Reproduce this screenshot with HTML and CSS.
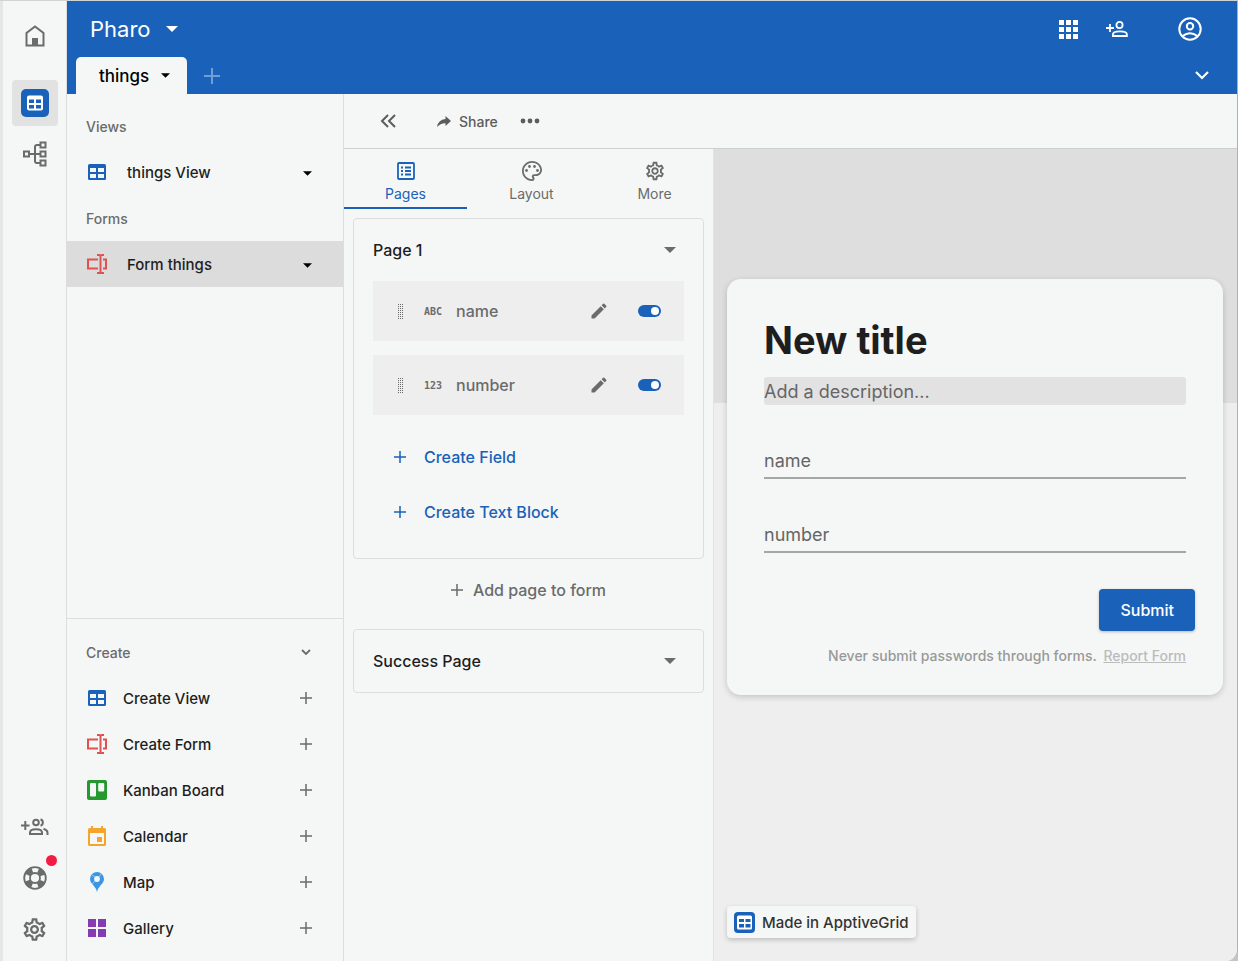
FILE: index.html
```html
<!DOCTYPE html>
<html lang="en">
<head>
    <meta charset="utf-8">
    <meta name="viewport" content="width=device-width, initial-scale=1">
    <title>Pharo - Form things</title>
    <link rel="stylesheet" href="styles.css">
</head>
<body>
    <!-- shared icons -->
    <svg class="icon-defs" aria-hidden="true">
        <symbol id="icon-caret" viewBox="0 0 12 6"><path d="M0 0h12L6 6z" fill="currentColor"/></symbol>
        <symbol id="icon-plus" viewBox="0 0 12 12"><path d="M6 0v12M0 6h12" stroke="currentColor" stroke-width="1.5" fill="none"/></symbol>
        <symbol id="icon-table" viewBox="0 0 18 16">
            <rect width="18" height="16" rx="1.5" fill="#1a62b9"/>
            <path d="M2 4h6v4H2zM10 4h6v4h-6zM2 10h6v4H2zM10 10h6v4h-6z" fill="#f5f7f6"/>
        </symbol>
        <symbol id="icon-form" viewBox="0 0 20 20">
            <path d="M11 5.5H1v9h10M16 5.500h3v9h-3M10 1h2.200q1.300 0 1.300 1.300v15.400q0 1.300-1.300 1.300H10M17 1h-2.200q-1.300 0-1.300 1.300M17 19h-2.200q-1.300 0-1.300-1.300" fill="none" stroke="#e05252" stroke-width="2"/>
        </symbol>
        <symbol id="icon-gear" viewBox="0 0 24 24">
            <path fill="currentColor" d="M19.430 12.980c.04-.32.07-.64.07-.98 0-.34-.03-.66-.07-.98l2.110-1.650c.19-.15.24-.42.12-.64l-2-3.460c-.09-.16-.26-.25-.44-.25-.06 0-.12.01-.17.03l-2.490 1c-.52-.4-1.080-.73-1.690-.98l-.38-2.650C14.460 2.180 14.250 2 14 2h-4c-.25 0-.46.18-.49.42l-.38 2.650c-.61.25-1.170.59-1.690.98l-2.490-1c-.06-.02-.12-.03-.18-.03-.17 0-.34.09-.43.25l-2 3.460c-.13.22-.07.49.12.64l2.110 1.650c-.04.32-.07.65-.07.98 0 .33.03.66.07.98l-2.110 1.650c-.19.15-.24.42-.12.64l2 3.460c.09.16.26.25.44.25.06 0 .12-.01.17-.03l2.490-1c.52.4 1.080.73 1.690.98l.38 2.650c.03.24.24.42.49.42h4c.25 0 .46-.18.49-.42l.38-2.650c.61-.25 1.170-.59 1.690-.98l2.490 1c.06.02.12.03.18.03.17 0 .34-.09.43-.25l2-3.460c.12-.22.07-.49-.12-.64l-2.110-1.650zm-1.980-1.710c.04.31.05.52.05.73 0 .21-.02.43-.05.73l-.14 1.130.89.7 1.080.84-.7 1.210-1.270-.51-1.040-.42-.9.68c-.43.32-.84.56-1.250.73l-1.060.43-.16 1.130-.2 1.350h-1.400l-.19-1.350-.16-1.130-1.060-.43c-.43-.18-.83-.41-1.230-.71l-.91-.7-1.060.43-1.270.51-.7-1.210 1.080-.84.89-.7-.14-1.130c-.03-.31-.05-.54-.05-.74s.02-.43.05-.73l.14-1.130-.89-.7-1.080-.84.7-1.210 1.270.51 1.040.42.9-.68c.43-.32.84-.56 1.250-.73l1.060-.43.16-1.130.2-1.350h1.390l.19 1.350.16 1.130 1.060.43c.43.18.83.41 1.230.71l.91.7 1.060-.43 1.270-.51.7 1.210-1.070.85-.89.7.14 1.130zM12 8c-2.210 0-4 1.790-4 4s1.790 4 4 4 4-1.790 4-4-1.790-4-4-4zm0 6c-1.100 0-2-.9-2-2s.9-2 2-2 2 .9 2 2-.9 2-2 2z"/>
        </symbol>
        <symbol id="icon-edit" viewBox="0 0 24 24">
            <path fill="currentColor" d="M3 17.250V21h3.750L17.810 9.940l-3.750-3.750L3 17.250zM20.710 7.040c.39-.39.39-1.020 0-1.410l-2.340-2.340a1 1 0 0 0-1.410 0l-1.830 1.830 3.750 3.750 1.830-1.830z"/>
        </symbol>
        <symbol id="icon-drag" viewBox="0 0 5 15">
            <path d="M.5 0v15M2.500 0v15M4.500 0v15" stroke="currentColor" stroke-width="1" stroke-dasharray="1 1" fill="none"/>
        </symbol>
    </svg>

    <div class="app">
        <nav class="rail" aria-label="Main">
            <button class="rail-btn rail-home" aria-label="Home">
                <svg width="20" height="22" viewBox="0 0 20 22"><path d="M1.500 20.500V8L10 1.500 18.500 8v12.500z" fill="none" stroke="currentColor" stroke-width="2"/><path d="M7 13h6v8H7z" fill="currentColor"/></svg>
            </button>
            <button class="rail-btn active" aria-label="Grids">
                <svg width="28" height="28" viewBox="0 0 28 28"><rect width="28" height="28" rx="5" fill="#1a62b9"/><rect x="6" y="6.500" width="16" height="15" rx="2" fill="#fff"/><path d="M8 10.500h5v3.500H8zM15 10.500h5v3.500h-5zM8 16h5v3.500H8zM15 16h5v3.500h-5z" fill="#1a62b9"/></svg>
            </button>
            <button class="rail-btn" aria-label="Flows">
                <svg width="24" height="26" viewBox="0 0 24 26" fill="none" stroke="currentColor" stroke-width="2"><path d="M1 10.500h5v5H1zM17.500 1.500h5v5h-5zM17.500 10.500h5v5h-5zM17.500 19.500h5v5h-5zM6 13h11.500M17.500 4H14q-2 0-2 2v14q0 2 2 2h3.500"/></svg>
            </button>
            <div class="rail-space"></div>
            <button class="rail-btn" aria-label="Invite to team">
                <svg width="28" height="18" viewBox="0 0 28 18" fill="none" stroke="currentColor" stroke-width="2"><path d="M0 7.500h8.500M4.300 3v9"/><circle cx="15" cy="4.500" r="2.800"/><path d="M9 16v-1.500c0-4.500 12-4.500 12 0V16z"/><path d="M19.500 1.200a3.500 3.500 0 0 1 0 6.600M22.500 10.800q4 1.400 4 3.700V17"/></svg>
            </button>
            <button class="rail-btn" aria-label="Help">
                <svg width="24" height="24" viewBox="0 0 24 24" fill="none" stroke="currentColor"><circle cx="12" cy="12" r="10.800" stroke-width="1.800"/><circle cx="12" cy="12" r="5" stroke-width="1.800"/><circle cx="12" cy="12" r="8.200" stroke-width="5.500" stroke-dasharray="6.880 6" stroke-dashoffset="-3"/></svg>
                <span class="rail-dot"></span>
            </button>
            <button class="rail-btn" aria-label="Settings">
                <svg width="27" height="27"><use href="#icon-gear"/></svg>
            </button>
        </nav>

        <div class="workspace">
            <header class="topbar">
                <div class="topbar-row">
                    <button class="space-name">Pharo <svg width="12" height="6"><use href="#icon-caret"/></svg></button>
                    <div class="topbar-actions">
                        <button aria-label="Apps"><svg width="19" height="19" viewBox="0 0 19 19" fill="#fff"><path d="M0 0h5v5H0zM7 0h5v5H7zM14 0h5v5h-5zM0 7h5v5H0zM7 7h5v5H7zM14 7h5v5h-5zM0 14h5v5H0zM7 14h5v5H7zM14 14h5v5h-5z"/></svg></button>
                        <button aria-label="Add person"><svg width="22" height="16" viewBox="0 0 22 16" fill="none" stroke="#fff" stroke-width="1.800"><path d="M0 7h8M4 3v8"/><circle cx="13.500" cy="4" r="3.100"/><path d="M6.900 15v-1.600c0-4 14-4 14 0V15z"/></svg></button>
                        <button class="account" aria-label="Account"><svg width="24" height="24" viewBox="0 0 24 24" fill="none" stroke="#fff" stroke-width="2"><circle cx="12" cy="12" r="10.700"/><circle cx="12" cy="9.200" r="3.200"/><path d="M4.600 19q7.400-5.500 14.800 0"/></svg></button>
                    </div>
                </div>
                <div class="tab-row">
                    <button class="grid-tab">things <svg width="9" height="5"><use href="#icon-caret"/></svg></button>
                    <button class="tab-add" aria-label="Add grid"><svg width="16" height="16"><use href="#icon-plus"/></svg></button>
                    <button class="tab-more" aria-label="Show all grids"><svg width="14" height="9" viewBox="0 0 14 9"><path d="M1 1l6 6 6-6" fill="none" stroke="#fff" stroke-width="2.200"/></svg></button>
                </div>
            </header>

            <div class="body">
                <aside class="sidebar">
                    <section class="views">
                        <h2 class="side-title">Views</h2>
                        <button class="side-item">
                            <svg class="side-icon" width="18" height="16"><use href="#icon-table"/></svg>
                            <span>things View</span>
                            <svg class="side-end" width="9" height="5"><use href="#icon-caret"/></svg>
                        </button>
                        <h2 class="side-title">Forms</h2>
                        <button class="side-item selected">
                            <svg class="side-icon" width="20" height="20"><use href="#icon-form"/></svg>
                            <span>Form things</span>
                            <svg class="side-end" width="9" height="5"><use href="#icon-caret"/></svg>
                        </button>
                    </section>
                    <section class="create">
                        <button class="side-title create-toggle">Create <svg width="10" height="6" viewBox="0 0 10 6"><path d="M1 1l4 4 4-4" fill="none" stroke="currentColor" stroke-width="1.800"/></svg></button>
                        <button class="side-item">
                            <svg class="side-icon" width="18" height="16"><use href="#icon-table"/></svg>
                            <span>Create View</span>
                            <svg class="side-end" width="12" height="12"><use href="#icon-plus"/></svg>
                        </button>
                        <button class="side-item">
                            <svg class="side-icon" width="20" height="20"><use href="#icon-form"/></svg>
                            <span>Create Form</span>
                            <svg class="side-end" width="12" height="12"><use href="#icon-plus"/></svg>
                        </button>
                        <button class="side-item">
                            <svg class="side-icon" width="20" height="20" viewBox="0 0 20 20"><rect width="20" height="20" rx="2" fill="#23992e"/><rect x="3" y="3" width="6" height="13.500" rx="1" fill="#f5f7f6"/><rect x="11.200" y="3" width="6" height="8.500" rx="1" fill="#f5f7f6"/></svg>
                            <span>Kanban Board</span>
                            <svg class="side-end" width="12" height="12"><use href="#icon-plus"/></svg>
                        </button>
                        <button class="side-item">
                            <svg class="side-icon" width="18" height="20" viewBox="0 0 18 20"><path d="M3 0h2v2h8V0h2v2h1.500Q18 2 18 3.500v15q0 1.500-1.500 1.500h-15Q0 20 0 18.500v-15Q0 2 1.500 2H3zM2 7v11h14V7z" fill="#f5a62a" fill-rule="evenodd"/><path d="M9 11h5v5H9z" fill="#f5a62a"/></svg>
                            <span>Calendar</span>
                            <svg class="side-end" width="12" height="12"><use href="#icon-plus"/></svg>
                        </button>
                        <button class="side-item">
                            <svg class="side-icon" width="14" height="20" viewBox="0 0 14 20"><path d="M7 20Q6.300 16.500 3.500 13.500 0 10 0 7a7 7 0 0 1 14 0q0 3-3.500 6.500Q7.700 16.500 7 20z" fill="#3b97e3"/><circle cx="7" cy="7" r="2.900" fill="#f5f7f6"/><path d="M2 3l3 2M11.500 1.500L9 5M5 9l-3 3" stroke="#b5d7f3" stroke-width=".8"/></svg>
                            <span>Map</span>
                            <svg class="side-end" width="12" height="12"><use href="#icon-plus"/></svg>
                        </button>
                        <button class="side-item">
                            <svg class="side-icon" width="18" height="18" viewBox="0 0 18 18"><path d="M0 0h8v8H0zM10 0h8v8h-8zM0 10h8v8H0zM10 10h8v8h-8z" fill="#873bb3"/></svg>
                            <span>Gallery</span>
                            <svg class="side-end" width="12" height="12"><use href="#icon-plus"/></svg>
                        </button>
                    </section>
                </aside>

                <main class="content">
                    <div class="toolbar">
                        <button aria-label="Collapse sidebar"><svg width="16" height="14" viewBox="0 0 16 14"><path d="M8 1L2 7l6 6M15 1L9 7l6 6" fill="none" stroke="currentColor" stroke-width="2"/></svg></button>
                        <button class="share"><svg width="14" height="11" viewBox="0 0 14 11"><path d="M8.500 0L14 5l-5.500 5V7.200Q3.500 7 0 11 1 3.800 8.500 3z" fill="currentColor"/></svg> Share</button>
                        <button aria-label="More actions"><svg width="20" height="6" viewBox="0 0 20 6" fill="currentColor"><circle cx="3" cy="3" r="2.400"/><circle cx="10" cy="3" r="2.400"/><circle cx="17" cy="3" r="2.400"/></svg></button>
                    </div>

                    <div class="editor">
                        <div class="panel">
                            <div class="panel-tabs" role="tablist">
                                <button class="panel-tab current" role="tab" aria-selected="true">
                                    <svg width="18" height="18" viewBox="0 0 18 18" fill="none" stroke="currentColor" stroke-width="1.800"><rect x="1" y="1" width="16" height="16" rx="1"/><path d="M4 5.500h2M8 5.500h6M4 9h2M8 9h6M4 12.500h2M8 12.500h6"/></svg>
                                    Pages
                                </button>
                                <button class="panel-tab" role="tab" aria-selected="false">
                                    <svg width="20" height="20" viewBox="2 2 20 20" fill="currentColor"><path d="M12 22C6.490 22 2 17.510 2 12S6.490 2 12 2s10 4.040 10 9c0 3.310-2.690 6-6 6h-1.770c-.28 0-.5.22-.5.5 0 .12.05.23.13.33.41.47.64 1.060.64 1.670A2.500 2.500 0 0 1 12 22zm0-18.200c-4.500 0-8.200 3.700-8.200 8.200s3.700 8.200 8.200 8.200c.4 0 .6-.3.6-.7 0-.2-.1-.3-.2-.4-.4-.4-.6-1-.6-1.600a2.400 2.400 0 0 1 2.400-2.300H16c2.300 0 4.200-1.900 4.200-4.200 0-4-3.700-7.200-8.200-7.200z"/><circle cx="6.500" cy="11.500" r="1.400"/><circle cx="9.500" cy="7.500" r="1.400"/><circle cx="14.500" cy="7.500" r="1.400"/><circle cx="17.500" cy="11.500" r="1.400"/></svg>
                                    Layout
                                </button>
                                <button class="panel-tab" role="tab" aria-selected="false">
                                    <svg width="22" height="22"><use href="#icon-gear"/></svg>
                                    More
                                </button>
                            </div>

                            <div class="pages">
                                <section class="page-card">
                                    <button class="page-head">Page 1 <svg width="12" height="6"><use href="#icon-caret"/></svg></button>
                                    <div class="fields">
                                        <div class="field">
                                            <svg width="5" height="15"><use href="#icon-drag"/></svg>
                                            <span class="field-type">ABC</span>
                                            <label class="field-name" for="show-name">name</label>
                                            <button aria-label="Edit name"><svg width="20" height="20"><use href="#icon-edit"/></svg></button>
                                            <input class="toggle" type="checkbox" id="show-name" checked>
                                        </div>
                                        <div class="field">
                                            <svg width="5" height="15"><use href="#icon-drag"/></svg>
                                            <span class="field-type">123</span>
                                            <label class="field-name" for="show-number">number</label>
                                            <button aria-label="Edit number"><svg width="20" height="20"><use href="#icon-edit"/></svg></button>
                                            <input class="toggle" type="checkbox" id="show-number" checked>
                                        </div>
                                    </div>
                                    <div class="page-actions">
                                        <button class="page-action"><svg width="12" height="12"><use href="#icon-plus"/></svg> Create Field</button>
                                        <button class="page-action"><svg width="12" height="12"><use href="#icon-plus"/></svg> Create Text Block</button>
                                    </div>
                                </section>
                                <button class="add-page"><svg width="12" height="12"><use href="#icon-plus"/></svg> Add page to form</button>
                                <section class="page-card">
                                    <button class="page-head">Success Page <svg width="12" height="6"><use href="#icon-caret"/></svg></button>
                                </section>
                            </div>
                        </div>

                        <div class="preview">
                            <form class="form-card">
                                <h1>New title</h1>
                                <input class="description" type="text" placeholder="Add a description..." aria-label="Description">
                                <input class="form-input" type="text" placeholder="name" aria-label="name">
                                <input class="form-input" type="text" placeholder="number" aria-label="number">
                                <button class="submit" type="button">Submit</button>
                                <p class="form-note">Never submit passwords through forms. <a href="#">Report Form</a></p>
                            </form>
                            <a class="made-in" href="#">
                                <svg width="21" height="21" viewBox="0 0 21 21"><rect width="21" height="21" rx="4" fill="#1a62b9"/><rect x="3" y="3.500" width="15" height="14" rx="1.500" fill="#fff"/><path d="M5 7h5v3H5zM11.500 7h5v3h-5zM5 12h5v3.500H5zM11.500 12h5v3.500h-5z" fill="#1a62b9"/></svg>
                                Made in ApptiveGrid
                            </a>
                        </div>
                    </div>
                </main>
            </div>
        </div>
    </div>
</body>
</html>
```
FILE: styles.css
```css
* {
    box-sizing: border-box;
}
body {
    margin: 0;
    background: #c4c4c4;
    color: #1e1e1e;
    font-family: Inter, "Liberation Sans", sans-serif;
    font-size: 15px;
}
button {
    display: flex;
    align-items: center;
    margin: 0;
    padding: 0;
    border: 0;
    background: none;
    color: inherit;
    font: inherit;
    cursor: pointer;
}
svg {
    display: block;
    flex: none;
}
.icon-defs {
    display: none;
}
.app {
    display: flex;
    min-height: 100vh;
    overflow: hidden;
    border-top: 1px solid #d0d3d6;
    border-right: 1px solid #b0b0b0;
    border-bottom-right-radius: 12px;
    background: #f5f7f6;
}

/* left rail */
.rail {
    display: flex;
    flex-direction: column;
    align-items: center;
    gap: 5px;
    width: 67px;
    flex: none;
    padding: 12px 0 9px;
    border-left: 3px solid #e6e6e6;
    border-right: 1px solid #dcdddd;
    color: #6b6b6b;
}
.rail-btn {
    position: relative;
    justify-content: center;
    width: 46px;
    height: 46px;
    border-radius: 4px;
}
.rail-home {
    margin-bottom: 16px;
}
.rail-btn.active {
    background: #e2e2e2;
}
.rail-space {
    flex: 1;
}
.rail-dot {
    position: absolute;
    top: 0;
    right: 1px;
    width: 11px;
    height: 11px;
    border-radius: 50%;
    background: #f21c44;
}

.workspace {
    display: flex;
    flex-direction: column;
    flex: 1;
    min-width: 0;
}

/* blue header */
.topbar {
    background: #1a62b9;
    color: #fff;
}
.topbar-row {
    display: flex;
    align-items: center;
    justify-content: space-between;
    height: 56px;
    padding: 0 35px 0 23px;
}
.space-name {
    gap: 15px;
    font-size: 22px;
}
.topbar-actions {
    display: flex;
    align-items: center;
    gap: 28px;
}
.account {
    margin-left: 22px;
}
.tab-row {
    display: flex;
    align-items: center;
    height: 37px;
    padding: 0 28px 0 9px;
}
.grid-tab {
    gap: 12px;
    height: 37px;
    padding: 0 17px 0 23px;
    border-radius: 5px 5px 0 0;
    background: #f5f7f6;
    color: #000;
    font-size: 17px;
    font-weight: 500;
}
.tab-add {
    margin-left: 17px;
    color: #6f9fd6;
}
.tab-more {
    margin-left: auto;
}

.body {
    display: flex;
    flex: 1;
}

/* sidebar */
.sidebar {
    display: flex;
    flex-direction: column;
    justify-content: space-between;
    width: 277px;
    flex: none;
    border-right: 1px solid #dcdddd;
    font-weight: 500;
}
.views {
    padding-top: 9px;
}
.create {
    padding: 10px 0;
    border-top: 1px solid #dcdddd;
}
.side-title {
    display: flex;
    align-items: center;
    height: 46px;
    margin: 0;
    padding-left: 19px;
    color: #6b6b6b;
    font-size: 14px;
    font-weight: 500;
}
.create-toggle {
    justify-content: space-between;
    width: 100%;
    padding-right: 32px;
}
.side-item {
    display: grid;
    grid-template-columns: 20px 1fr 12px;
    align-items: center;
    gap: 20px;
    width: 100%;
    height: 46px;
    padding: 0 31px 0 20px;
    text-align: left;
}
.create .side-item {
    column-gap: 16px;
}
.side-item.selected {
    background: #dcdcdc;
}
.side-icon,
.side-end {
    justify-self: center;
}
.create .side-end {
    color: #6b6b6b;
}
.views .side-end {
    justify-self: end;
    margin-top: 3px;
    color: #000;
}

/* toolbar */
.content {
    display: flex;
    flex-direction: column;
    flex: 1;
    min-width: 0;
}
.toolbar {
    display: flex;
    align-items: center;
    height: 55px;
    padding-left: 36px;
    border-bottom: 1px solid #cdcece;
    color: #5c5c5c;
    font-size: 14px;
    font-weight: 500;
}
.share {
    gap: 8px;
    margin: 0 22px 0 41px;
}
.editor {
    display: flex;
    flex: 1;
}

/* form editor panel */
.panel {
    width: 370px;
    flex: none;
    border-right: 1px solid #e2e2e2;
}
.panel-tabs {
    display: grid;
    grid-template-columns: 123fr 129fr 117fr;
    height: 60px;
}
.panel-tab {
    flex-direction: column;
    justify-content: space-between;
    padding: 11px 0 4px;
    border-bottom: 2px solid transparent;
    color: #6b6b6b;
    font-size: 14px;
    line-height: 18px;
}
.panel-tab svg {
    height: 22px;
}
.panel-tab.current {
    border-color: #1a62b9;
    color: #1a62b9;
}
.pages {
    padding: 9px;
}
.page-card {
    padding: 0 19px;
    border: 1px solid #dcdddd;
    border-radius: 4px;
}
.page-head {
    justify-content: space-between;
    width: 100%;
    height: 62px;
    padding-right: 8px;
    font-size: 16px;
    font-weight: 500;
}
.page-head svg {
    color: #6b6b6b;
}
.fields {
    display: grid;
    gap: 14px;
}
.field {
    display: flex;
    align-items: center;
    height: 60px;
    padding: 0 23px 0 25px;
    background: #eeeeee;
    color: #6b6b6b;
}
.field-type {
    width: 36px;
    padding-left: 4px;
    margin-left: 17px;
    font-family: "DejaVu Sans Mono", monospace;
    font-size: 10px;
    font-weight: 700;
}
.field-name {
    flex: 1;
    font-size: 16px;
    font-weight: 500;
}
.toggle {
    appearance: none;
    display: flex;
    align-items: center;
    width: 23px;
    height: 12px;
    margin: 0 0 0 29px;
    padding: 0 2px;
    border-radius: 6px;
    background: #9a9a9a;
}
.toggle::before {
    content: "";
    width: 8px;
    height: 8px;
    border-radius: 50%;
    background: #fff;
}
.toggle:checked {
    justify-content: flex-end;
    background: #1a62b9;
}
.page-actions {
    padding: 14px 0 19px 21px;
}
.page-action {
    gap: 18px;
    height: 55px;
    color: #1a62b9;
    font-size: 16px;
    font-weight: 500;
}
.add-page {
    justify-content: center;
    gap: 10px;
    width: 100%;
    height: 62px;
    margin-bottom: 8px;
    color: #6b6b6b;
    font-size: 16px;
    font-weight: 500;
}

/* live preview */
.preview {
    display: flex;
    flex-direction: column;
    justify-content: space-between;
    align-items: flex-start;
    flex: 1;
    min-width: 0;
    padding: 130px 14px 23px 13px;
    background: linear-gradient(#dedede 254px, #eeeeee 254px);
}
.form-card {
    display: flex;
    flex-direction: column;
    width: 100%;
    padding: 37px 37px 30px;
    border-radius: 14px;
    background: #f5f7f6;
    box-shadow: 0 2px 6px rgba(0,0,0,0.18);
}
.form-card h1 {
    margin: 0 0 13px;
    font-size: 38px;
    font-weight: 700;
    line-height: 48px;
}
.description,
.form-input {
    width: 100%;
    padding: 0;
    border: 0;
    background: none;
    color: #1e1e1e;
    font-family: inherit;
    font-size: 18px;
}
.description {
    height: 28px;
    border-radius: 3px;
    background: #e2e2e2;
}
.form-input {
    height: 38px;
    margin-top: 36px;
    padding-top: 2px;
    border-bottom: 2px solid #a5a7a6;
}
.description::placeholder,
.form-input::placeholder {
    color: #666;
    opacity: 1;
}
.submit {
    align-self: flex-end;
    height: 42px;
    margin: 36px -9px 0 0;
    padding: 0 21px;
    border-radius: 4px;
    background: #1a62b9;
    color: #fff;
    font-size: 16px;
    font-weight: 500;
    box-shadow: 0 1px 3px rgba(0,0,0,0.25);
}
.form-note {
    margin: 16px 0 0;
    color: #999;
    font-size: 14px;
    font-weight: 500;
    line-height: 18px;
    text-align: right;
}
.form-note a {
    margin-left: 3px;
    color: #bbb;
}
.made-in {
    display: flex;
    align-items: center;
    gap: 7px;
    height: 32px;
    padding: 0 7px;
    border-radius: 4px;
    background: #f5f7f6;
    color: #333;
    font-weight: 500;
    text-decoration: none;
    box-shadow: 0 2px 5px rgba(0,0,0,0.2);
}
```
